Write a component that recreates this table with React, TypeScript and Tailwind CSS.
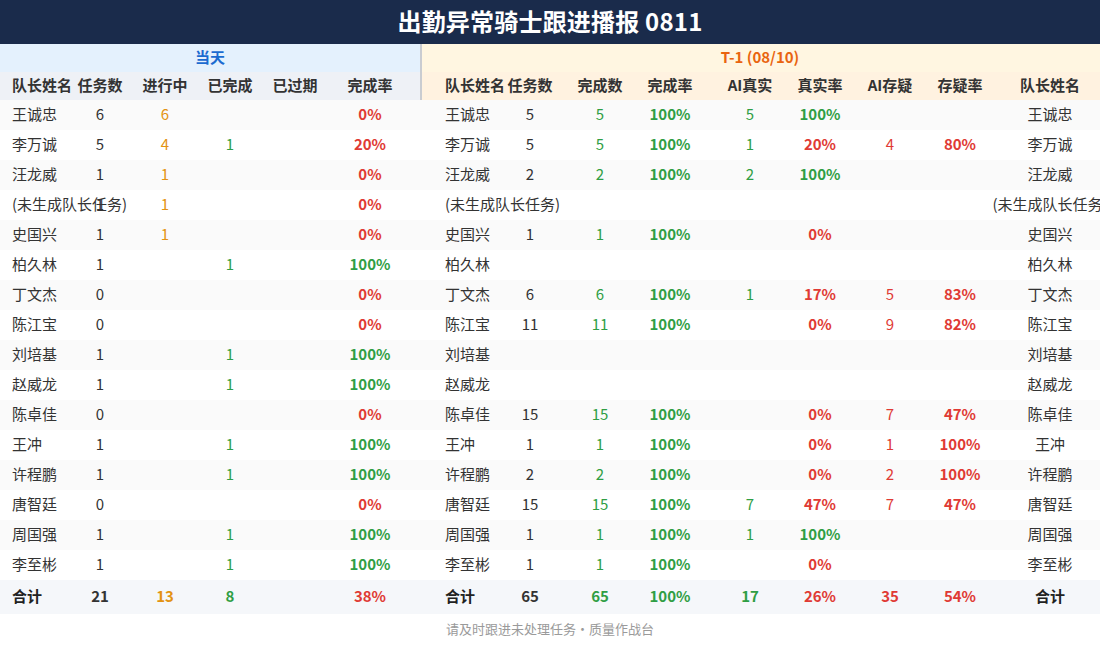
import React from 'react';

type Tone = 'dark' | 'orange' | 'green' | 'red';

type Cell = { v: string; tone?: Tone; bold?: boolean } | null;

const toneClass: Record<Tone, string> = {
  dark: 'text-[#333333]',
  orange: 'text-[#e39212]',
  green: 'text-[#2f9e44]',
  red: 'text-[#e03a34]',
};

// left: 任务数 进行中 已完成 已过期 完成率
const leftW = ['w-[64px]', 'w-[66px]', 'w-[64px]', 'w-[66px]', 'w-[84px]'];
// right: 任务数 完成数 完成率 AI真实 真实率 AI存疑 存疑率 队长姓名
const rightW = ['w-[70px]', 'w-[70px]', 'w-[70px]', 'w-[90px]', 'w-[50px]', 'w-[90px]', 'w-[50px]', 'w-[130px]'];

const rate = (v: string, bold = true): Cell => ({ v, tone: v === '100%' ? 'green' : 'red', bold });
const n = (v: string, tone: Tone = 'dark'): Cell => ({ v, tone });

type Row = { name: string; left: Cell[]; right: Cell[] | null };

const rows: Row[] = [
  { name: '王诚忠', left: [n('6'), n('6', 'orange'), null, null, rate('0%')], right: [n('5'), n('5', 'green'), rate('100%'), n('5', 'green'), rate('100%'), null, null] },
  { name: '李万诚', left: [n('5'), n('4', 'orange'), n('1', 'green'), null, rate('20%')], right: [n('5'), n('5', 'green'), rate('100%'), n('1', 'green'), rate('20%'), n('4', 'red'), rate('80%')] },
  { name: '汪龙威', left: [n('1'), n('1', 'orange'), null, null, rate('0%')], right: [n('2'), n('2', 'green'), rate('100%'), n('2', 'green'), rate('100%'), null, null] },
  { name: '(未生成队长任务)', left: [n('1'), n('1', 'orange'), null, null, rate('0%')], right: null },
  { name: '史国兴', left: [n('1'), n('1', 'orange'), null, null, rate('0%')], right: [n('1'), n('1', 'green'), rate('100%'), null, rate('0%'), null, null] },
  { name: '柏久林', left: [n('1'), null, n('1', 'green'), null, rate('100%')], right: null },
  { name: '丁文杰', left: [n('0'), null, null, null, rate('0%')], right: [n('6'), n('6', 'green'), rate('100%'), n('1', 'green'), rate('17%'), n('5', 'red'), rate('83%')] },
  { name: '陈江宝', left: [n('0'), null, null, null, rate('0%')], right: [n('11'), n('11', 'green'), rate('100%'), null, rate('0%'), n('9', 'red'), rate('82%')] },
  { name: '刘培基', left: [n('1'), null, n('1', 'green'), null, rate('100%')], right: null },
  { name: '赵威龙', left: [n('1'), null, n('1', 'green'), null, rate('100%')], right: null },
  { name: '陈卓佳', left: [n('0'), null, null, null, rate('0%')], right: [n('15'), n('15', 'green'), rate('100%'), null, rate('0%'), n('7', 'red'), rate('47%')] },
  { name: '王冲', left: [n('1'), null, n('1', 'green'), null, rate('100%')], right: [n('1'), n('1', 'green'), rate('100%'), null, rate('0%'), n('1', 'red'), { v: '100%', tone: 'red', bold: true }] },
  { name: '许程鹏', left: [n('1'), null, n('1', 'green'), null, rate('100%')], right: [n('2'), n('2', 'green'), rate('100%'), null, rate('0%'), n('2', 'red'), { v: '100%', tone: 'red', bold: true }] },
  { name: '唐智廷', left: [n('0'), null, null, null, rate('0%')], right: [n('15'), n('15', 'green'), rate('100%'), n('7', 'green'), rate('47%'), n('7', 'red'), rate('47%')] },
  { name: '周国强', left: [n('1'), null, n('1', 'green'), null, rate('100%')], right: [n('1'), n('1', 'green'), rate('100%'), n('1', 'green'), rate('100%'), null, null] },
  { name: '李至彬', left: [n('1'), null, n('1', 'green'), null, rate('100%')], right: [n('1'), n('1', 'green'), rate('100%'), null, rate('0%'), null, null] },
];

const b = (v: string, tone: Tone = 'dark'): Cell => ({ v, tone, bold: true });
const totalLeft: Cell[] = [b('21'), b('13', 'orange'), b('8', 'green'), null, b('38%', 'red')];
const totalRight: Cell[] = [b('65'), b('65', 'green'), b('100%', 'green'), b('17', 'green'), b('26%', 'red'), b('35', 'red'), b('54%', 'red')];

function C({ cell, w }: { cell: Cell; w: string }) {
  return (
    <div className={`${w} shrink-0 flex justify-center whitespace-nowrap`}>
      {cell && (
        <span className={`${toneClass[cell.tone ?? 'dark']} ${cell.bold ? 'font-bold' : ''}`}>{cell.v}</span>
      )}
    </div>
  );
}

function DataRow({ name, left, right, bg, total }: { name: string; left: Cell[]; right: Cell[] | null; bg: string; total?: boolean }) {
  const nameCls = total ? 'font-bold text-[#222222]' : 'text-[#333333]';
  return (
    <div className={`flex items-center pb-[4px] ${total ? 'h-[34px]' : 'h-[30px]'} ${bg}`}>
      <div className="w-[420px] shrink-0 flex items-center">
        <div className={`w-[68px] shrink-0 pl-[12px] whitespace-nowrap ${nameCls}`}>{name}</div>
        {left.map((c, i) => (
          <C key={i} cell={c} w={leftW[i]} />
        ))}
      </div>
      <div className="w-[2px] shrink-0" />
      <div className="flex items-center shrink-0">
        <div className={`w-[73px] shrink-0 pl-[23px] whitespace-nowrap ${nameCls}`}>{name}</div>
        {(right ?? [null, null, null, null, null, null, null]).map((c, i) => (
          <C key={i} cell={c} w={rightW[i]} />
        ))}
        <div className="w-[130px] shrink-0 flex justify-center whitespace-nowrap">
          <span className={nameCls}>{name}</span>
        </div>
      </div>
    </div>
  );
}

export default function App() {
  const leftHeads = ['任务数', '进行中', '已完成', '已过期', '完成率'];
  const rightHeads = ['任务数', '完成数', '完成率', 'AI真实', '真实率', 'AI存疑', '存疑率', '队长姓名'];

  return (
    <div
      className="w-[1100px] h-[646px] overflow-hidden bg-white text-[15px] leading-none"
      style={{ fontFamily: '"Noto Sans CJK SC", "Noto Sans", sans-serif' }}
    >
      {/* title */}
      <div className="h-[44px] bg-[#1a2b4b] flex items-center justify-center pb-[3px]">
        <h1 className="text-white text-[24px] font-bold tracking-[0.2px]">出勤异常骑士跟进播报 0811</h1>
      </div>

      <div className="w-[1100px] overflow-hidden">
        <div className="w-[1120px]">
          {/* group header */}
          <div className="flex h-[28px]">
            <div className="w-[420px] shrink-0 bg-[#e4f1fd] flex items-center justify-center pb-[4px] font-bold text-[#1b6bd0]">当天</div>
            <div className="w-[2px] shrink-0 bg-[#c9ccd1]" />
            <div className="w-[693px] shrink-0 bg-[#fff6e1] flex items-center justify-center pb-[4px] pr-[17px] font-bold text-[#e9640f]">
              T-1 (08/10)
            </div>
          </div>

          {/* column header */}
          <div className="flex h-[28px] font-bold text-[#333333]">
            <div className="w-[420px] shrink-0 bg-[#eef1f6] flex items-center pb-[3px]">
              <div className="w-[68px] shrink-0 pl-[12px] whitespace-nowrap">队长姓名</div>
              {leftHeads.map((h, i) => (
                <div key={h} className={`${leftW[i]} shrink-0 flex justify-center whitespace-nowrap`}>{h}</div>
              ))}
            </div>
            <div className="w-[2px] shrink-0 bg-[#c9ccd1]" />
            <div className="w-[693px] shrink-0 bg-[#fff2e0] flex items-center pb-[3px]">
              <div className="w-[73px] shrink-0 pl-[23px] whitespace-nowrap">队长姓名</div>
              {rightHeads.map((h, i) => (
                <div key={h + i} className={`${rightW[i]} shrink-0 flex justify-center whitespace-nowrap`}>{h}</div>
              ))}
            </div>
          </div>

          {/* body */}
          {rows.map((r, i) => (
            <DataRow key={r.name} name={r.name} left={r.left} right={r.right} bg={i % 2 === 0 ? 'bg-[#fafafa]' : 'bg-white'} />
          ))}

          <DataRow name="合计" left={totalLeft} right={totalRight} bg="bg-[#f5f7fa]" total />
        </div>
      </div>

      <div className="h-[32px] flex items-center justify-center pb-[4px] text-[13px] text-[#9a9a9a]">
        请及时跟进未处理任务·质量作战台
      </div>
    </div>
  );
}
